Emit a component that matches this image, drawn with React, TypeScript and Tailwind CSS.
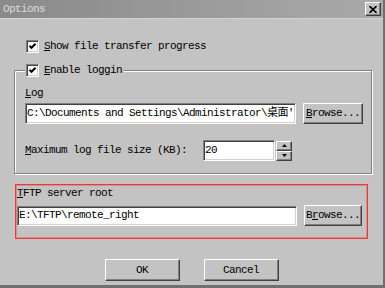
import React from 'react';

const font = "font-['Liberation_Mono','Noto_Sans_CJK_SC',monospace] text-[11px] tracking-[-0.6px] leading-[13px] text-black";

const sunken =
  'border border-t-[#808080] border-l-[#808080] border-b-white border-r-white shadow-[inset_1px_1px_0_#404040,inset_-1px_-1px_0_#d4d0c8]';
const raised =
  'border border-t-white border-l-white border-b-[#404040] border-r-[#404040] shadow-[inset_-1px_-1px_0_#808080] bg-[#c3c3c3]';

function Check() {
  return (
    <span className={`flex h-[13px] w-[13px] shrink-0 items-center justify-center bg-white ${sunken}`}>
      <svg width="7" height="7" viewBox="0 0 7 7">
        <path d="M0.5 2.8 L2.5 4.8 L6.5 0.8" stroke="#000" strokeWidth="2" fill="none" />
      </svg>
    </span>
  );
}

function Btn({ children, className = '' }: { children: React.ReactNode; className?: string }) {
  return (
    <button className={`flex items-center justify-center whitespace-nowrap ${raised} ${font} ${className}`}>{children}</button>
  );
}

function Field({ value, className = '' }: { value: string; className?: string }) {
  return (
    <div className={`flex items-center overflow-hidden whitespace-nowrap bg-white pl-px ${sunken} ${className}`}>
      {value}
    </div>
  );
}

export default function App() {
  return (
    <div className={`flex h-[288px] w-[385px] flex-col overflow-hidden border-r-2 border-b-[3px] border-[#707070] bg-[#c3c3c3] ${font}`}>
      <div className="flex h-[18px] shrink-0 items-center justify-between bg-linear-to-r from-[#8a8a8a] to-[#aaaaaa] pl-[3px] pr-[2px]">
        <span className="text-[#dcdcdc]">Options</span>
        <span className={`flex h-[14px] w-[16px] items-center justify-center ${raised}`}>
          <svg width="8" height="7" viewBox="0 0 8 7">
            <path d="M0.5 0 L7.5 7 M7.5 0 L0.5 7" stroke="#000" strokeWidth="1.6" />
          </svg>
        </span>
      </div>
      <div className="h-px shrink-0 bg-[#d4d4d4]" />

      <label className="ml-[26px] mt-[21px] flex items-center gap-[5px]">
        <Check />
        <span className="first-letter:underline">Show file transfer progress</span>
      </label>

      <fieldset className="ml-[14px] mt-[11px] w-[358px] border border-[#808080] pl-[10px] pr-[8px] pb-[12px] shadow-[inset_1px_1px_0_#fff,1px_1px_0_#fff]">
        <legend className="flex items-center gap-[5px] bg-[#c3c3c3] pl-px pr-[2px]">
          <Check />
          <span className="first-letter:underline">Enable loggin</span>
        </legend>
        <div className="mt-[10px] first-letter:underline">Log</div>
        <div className="mt-[3px] flex items-center gap-[7px]">
          <Field value={"C:\\Documents and Settings\\Administrator\\桌面'"} className="h-[21px] w-[271px]" />
          <Btn className="h-[21px] w-[60px]">
            <span className="first-letter:underline">Browse...</span>
          </Btn>
        </div>
        <div className="mt-[16px] flex items-center">
          <span className="w-[178px] first-letter:underline">Maximum log file size (KB):</span>
          <Field value="20" className="h-[21px] w-[72px]" />
          <div className="ml-px flex flex-col">
            <span className={`flex h-[10px] w-[16px] items-center justify-center ${raised}`}>
              <svg width="5" height="3" viewBox="0 0 5 3"><path d="M2.5 0 L5 3 L0 3 Z" fill="#000" /></svg>
            </span>
            <span className={`flex h-[10px] w-[16px] items-center justify-center ${raised}`}>
              <svg width="5" height="3" viewBox="0 0 5 3"><path d="M0 0 L5 0 L2.5 3 Z" fill="#000" /></svg>
            </span>
          </div>
        </div>
      </fieldset>

      <div className="ml-[15px] mt-[10px] flex w-[353px] flex-col border border-[#c84848] pl-px pb-[12px] pr-[5px] pt-px shadow-[0_0_0_1px_#e8b4b4,inset_0_0_0_1px_#dc8c8c]">
        <div className="mt-px first-letter:underline">TFTP server root</div>
        <div className="mt-[5px] flex items-center gap-[7px]">
          <Field value={'E:\\TFTP\\remote_right'} className="h-[20px] w-[281px]" />
          <Btn className="h-[21px] w-[58px]">
            B<span className="underline">r</span>owse...
          </Btn>
        </div>
      </div>

      <div className="mt-[20px] flex justify-center gap-[24px]">
        <Btn className="h-[22px] w-[75px]">OK</Btn>
        <Btn className="h-[22px] w-[75px]">Cancel</Btn>
      </div>
    </div>
  );
}
